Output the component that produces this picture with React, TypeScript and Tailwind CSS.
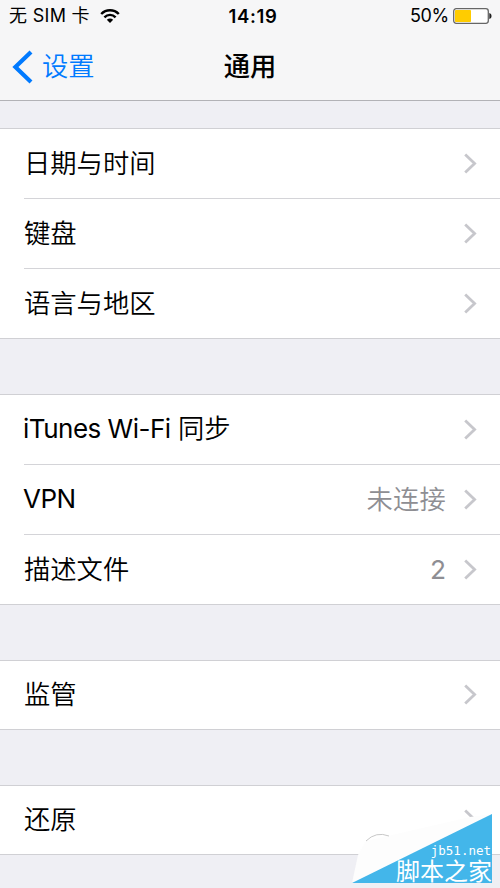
import React from 'react';

interface Item {
  label: string;
  latin?: string;
  value?: string;
}

const groups: Item[][] = [
  [{ label: '日期与时间' }, { label: '键盘' }, { label: '语言与地区' }],
  [
    { latin: 'iTunes Wi-Fi', label: '同步' },
    { latin: 'VPN', label: '', value: '未连接' },
    { label: '描述文件', value: '2' },
  ],
  [{ label: '监管' }],
  [{ label: '还原' }],
];

const Chevron: React.FC = () => (
  <svg width="14" height="22" viewBox="0 0 14 22" fill="none" stroke="#c7c7cc" strokeWidth="2.8">
    <path d="M1.2 1.6 L10.6 10.6 L1.2 19.6" />
  </svg>
);

const StatusBar: React.FC = () => (
  <div className="grid h-8 grid-cols-3 items-center pl-[9px] pr-2 text-[18px] leading-8">
    <div className="flex items-center">
      <span className="whitespace-pre tracking-[0.3px]">无 SIM 卡</span>
      <svg className="ml-[10px]" width="20" height="16" viewBox="0 0 20 16" fill="none" stroke="#000" strokeWidth="2.4">
        <path d="M1.2 6 C6 0.9 14 0.9 18.8 6" />
        <path d="M4.4 9.3 C7.6 6 12.4 6 15.6 9.3" />
        <path d="M10 15 L6.8 11.8 Q10 9.2 13.2 11.8 Z" fill="#000" stroke="none" />
      </svg>
    </div>
    <span className="pl-[5px] text-center text-[18.5px] font-semibold tracking-[0.7px]">14:19</span>
    <div className="flex items-center justify-end">
      <span className="tracking-[-0.3px]">50%</span>
      <svg className="ml-1" width="39" height="16" viewBox="0 0 39 16">
        <rect x="0.7" y="0.7" width="34.6" height="14.6" rx="2.5" fill="#fff" stroke="#666" strokeWidth="1.3" />
        <rect x="2" y="2" width="16" height="12" rx="0.8" fill="#ffcc00" />
        <path d="M36.3 5 Q38.6 5.3 38.6 8 Q38.6 10.7 36.3 11 Z" fill="#222" />
      </svg>
    </div>
  </div>
);

const Row: React.FC<{ item: Item; last: boolean; single: boolean }> = ({ item, last, single }) => (
  <div
    className={
      single
        ? 'flex h-[69px] items-center border-b border-[#d0d0d4] pl-6'
        : last
          ? 'flex h-[70px] items-center border-b border-[#d0d0d4] pl-6'
          : 'flex h-[70px] pl-6'
    }
  >
    <div className={last ? 'flex flex-1 items-center pr-[22px]' : 'flex flex-1 items-center border-b border-[#d4d4d8] pr-[22px]'}>
      <div className={item.latin ? 'flex-1 whitespace-pre pb-[2px] font-[350]' : 'flex-1 whitespace-pre font-[350]'}>
        {item.latin && <span className="-ml-px text-[26px] font-normal tracking-[-0.5px]">{item.latin}</span>}
        {item.latin && item.label && <span className="text-[26px]"> </span>}
        {item.label}
      </div>
      {item.value && (
        <span className={item.value === '2' ? 'mr-[18px] text-[#8e8e93]' : 'mr-[18px] font-[350] tracking-[0.2px] text-[#8e8e93]'}>
          {item.value}
        </span>
      )}
      <Chevron />
    </div>
  </div>
);

const Watermark: React.FC = () => (
  <div className="absolute left-[350px] top-[812px] h-[72px] w-[142px] text-white">
    <svg className="absolute inset-0" width="142" height="72" viewBox="0 0 142 72">
      <path d="M2 71 L8 43 L16 29 L120 5 L142 2 V71 Z" fill="#fdfdfd" />
      <path d="M16 29 Q26 19 39 24" fill="none" stroke="#c8c8c8" strokeWidth="1" />
      <path d="M2 71 L142 2 V71 Z" fill="#43b6ea" />
    </svg>
    <div className="absolute right-[1px] top-[31px] flex flex-col items-end">
      <span className="font-['DejaVu_Sans_Mono',monospace] text-[12.5px] leading-[15px]">jb51.net</span>
      <span className="-mr-px whitespace-nowrap text-[24px] leading-[28px]">脚本之家</span>
    </div>
  </div>
);

const App: React.FC = () => (
  <div className="relative h-[888px] w-[500px] overflow-hidden bg-[#efeff4] font-['Inter','Noto_Sans_CJK_SC',sans-serif] text-[26.3px] text-black">
    <header className="h-[101px] border-b border-[#b2b2b6] bg-[#f6f6f7]">
      <StatusBar />
      <nav className="grid h-[68px] grid-cols-3 items-center pl-3 pt-px">
        <button className="flex items-center font-[350] text-[#007aff]">
          <svg className="mr-[9px]" width="21" height="34" viewBox="0 0 21 34" fill="none" stroke="currentColor" strokeWidth="4.2">
            <path d="M19 2 L3.4 17 L19 32" />
          </svg>
          设置
        </button>
        <h1 className="-ml-3 text-center font-medium">通用</h1>
      </nav>
    </header>

    <main className="flex flex-col gap-[55px] pt-[27px]">
      {groups.map((items, g) => (
        <section key={g} className="border-t border-[#d0d0d4] bg-white">
          {items.map((item, i) => (
            <Row key={i} item={item} last={i === items.length - 1} single={items.length === 1} />
          ))}
        </section>
      ))}
    </main>

    <Watermark />
  </div>
);

export default App;
